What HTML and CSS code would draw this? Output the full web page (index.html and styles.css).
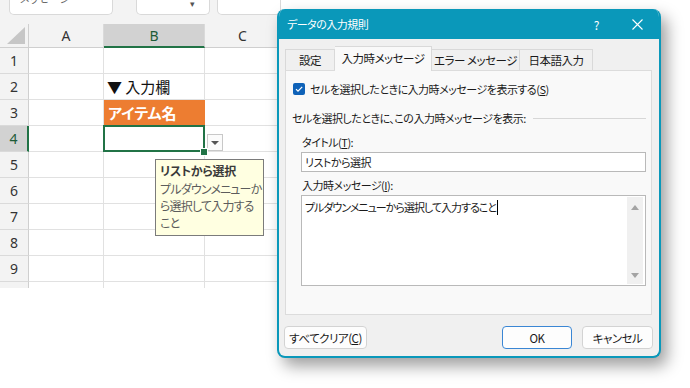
FILE: index.html
```html
<!DOCTYPE html>
<html lang="ja">
<head>
<meta charset="utf-8">
<title>データの入力規則</title>
<link rel="stylesheet" href="styles.css">
</head>
<body>
<div class="sheet">
  <div class="toolbar">
    <div class="tb tb1"><span class="tbtext">メッセージ　　　・・・</span></div>
    <div class="tb tb2"><span class="tbcaret">▾</span></div>
    <div class="tb tb3"></div>
  </div>
  <div class="grid">
    <div class="corner"><svg width="18" height="17" viewBox="0 0 18 17"><polygon points="18,0 18,17 0,17" fill="#c6c6c6"/></svg></div>
    <div class="ch">A</div><div class="ch sel">B</div><div class="ch">C</div>

    <div class="rh">1</div><div class="c"></div><div class="c"></div><div class="c"></div>
    <div class="rh">2</div><div class="c"></div><div class="c txt">▼ 入力欄</div><div class="c"></div>
    <div class="rh">3</div><div class="c"></div><div class="c orange">アイテム名</div><div class="c"></div>
    <div class="rh sel">4</div><div class="c"></div><div class="c active"><span class="handle"></span></div><div class="c"></div>
    <div class="rh">5</div><div class="c"></div><div class="c"></div><div class="c"></div>
    <div class="rh">6</div><div class="c"></div><div class="c"></div><div class="c"></div>
    <div class="rh">7</div><div class="c"></div><div class="c"></div><div class="c"></div>
    <div class="rh">8</div><div class="c"></div><div class="c"></div><div class="c"></div>
    <div class="rh">9</div><div class="c"></div><div class="c"></div><div class="c"></div>
    <div class="rh last"></div><div class="c last"></div><div class="c last"></div><div class="c last"></div>
  </div>
</div>

<div class="ddbtn"><span class="ddarrow"></span></div>

<div class="tooltip">
  <div class="tt-title">リストから選択</div>
  <div class="tt-line">プルダウンメニューか</div>
  <div class="tt-line">ら選択して入力する</div>
  <div class="tt-line">こと</div>
</div>

<div class="dialog">
  <div class="titlebar">
    <span class="title">データの入力規則</span>
    <span class="help">?</span>
    <svg class="close" width="11" height="11" viewBox="0 0 11 11"><path d="M0.5 0.5 L10.5 10.5 M10.5 0.5 L0.5 10.5" stroke="#fff" stroke-width="1.1" fill="none"/></svg>
  </div>
  <div class="dbody">
    <div class="tabs">
      <div class="tab t1">設定</div>
      <div class="tab active t2">入力時メッセージ</div>
      <div class="tab t3">エラー メッセージ</div>
      <div class="tab t4">日本語入力</div>
    </div>
    <div class="panel">
      <div class="chk">
        <span class="box"><svg width="12" height="12" viewBox="0 0 12 12"><path d="M3 6.2 L5 8.2 L9.2 3.8" stroke="#fff" stroke-width="1.2" fill="none"/></svg></span>
        <span>セルを選択したときに入力時メッセージを表示する(<u>S</u>)</span>
      </div>
      <div class="group"><span>セルを選択したときに、この入力時メッセージを表示:</span><span class="rule"></span></div>
      <div class="lbl">タイトル(<u>T</u>):</div>
      <div class="input">リストから選択</div>
      <div class="lbl lbl2">入力時メッセージ(<u>I</u>):</div>
      <div class="textarea">
        <div class="tatext">プルダウンメニューから選択して入力すること<span class="caret"></span></div>
        <div class="sb"><span class="sbup"></span><span class="sbdown"></span></div>
      </div>
    </div>
    <div class="buttons">
      <div class="btn clear">すべてクリア(<u>C</u>)</div>
      <div class="spacer"></div>
      <div class="btn ok">OK</div>
      <div class="btn cancel">キャンセル</div>
    </div>
  </div>
</div>
</body>
</html>
```

FILE: styles.css
```css
* { box-sizing: border-box; }

body {
  margin: 0;
  width: 690px;
  height: 388px;
  overflow: hidden;
  position: relative;
  background: #ffffff;
  font-family: "Noto Sans CJK JP", "Noto Sans", sans-serif;
  font-feature-settings: "palt";
}

/* ---------- spreadsheet ---------- */
.sheet { width: 281px; }

.toolbar {
  height: 24px;
  background: #f3f3f3;
  display: flex;
  padding-left: 9px;
  overflow: hidden;
}
.tb {
  height: 15px;
  background: #ffffff;
  border: 1px solid #d9d9d9;
  border-top: none;
  border-radius: 0 0 5px 5px;
  overflow: hidden;
  position: relative;
}
.tb1 { width: 104px; }
.tb2 { width: 74px; margin-left: 23px; }
.tb3 { flex: 1; margin-left: 7px; }
.tbtext {
  display: block;
  font-size: 11px;
  line-height: 11px;
  margin-top: -7px;
  padding-left: 10px;
  color: #666;
  white-space: nowrap;
}
.tbcaret {
  position: absolute;
  right: 14px;
  top: -3px;
  font-size: 9px;
  color: #555;
}

.grid {
  display: grid;
  grid-template-columns: 29px 75px 101px 76px;
  grid-template-rows: 24px repeat(9, 26px) 6px;
  font-family: "Noto Sans", "Noto Sans CJK JP", sans-serif;
}
.corner {
  background: #f3f3f3;
  border-right: 1px solid #cfcfcf;
  border-bottom: 1px solid #cfcfcf;
  display: flex;
  align-items: flex-end;
  justify-content: flex-end;
  padding: 0 3px 3px 0;
}
.ch {
  background: #f3f3f3;
  border-right: 1px solid #dadada;
  border-bottom: 1px solid #cfcfcf;
  display: flex;
  align-items: center;
  justify-content: center;
  font-size: 14px;
  color: #333;
}
.ch.sel {
  background: #d2d2d2;
  border-bottom: 2px solid #217346;
  color: #1e5c38;
}
.rh {
  background: #f3f3f3;
  border-right: 1px solid #cfcfcf;
  border-bottom: 1px solid #dadada;
  display: flex;
  align-items: center;
  justify-content: center;
  font-size: 14px;
  color: #333;
}
.rh.sel {
  background: #d2d2d2;
  border-right: 2px solid #217346;
  color: #1e5c38;
}
.rh.last, .c.last { border-bottom: none; }
.c {
  border-right: 1px solid #e1e1e1;
  border-bottom: 1px solid #e1e1e1;
}
.c.txt {
  display: flex;
  align-items: center;
  padding-left: 3px;
  font-family: "Noto Sans CJK JP", sans-serif;
  font-size: 15px;
  color: #111;
}
.c.orange {
  background: #ed7d31;
  border-color: #ed7d31;
  display: flex;
  align-items: center;
  padding-left: 4px;
  font-family: "Noto Sans CJK JP", sans-serif;
  font-size: 15px;
  font-weight: bold;
  color: #ffffff;
}
.c.active { position: relative; }
.c.active::before {
  content: "";
  position: absolute;
  left: -1px;
  top: -1px;
  right: -1px;
  bottom: -1px;
  border: 2px solid #217346;
}
.handle {
  position: absolute;
  right: -3px;
  bottom: -4px;
  width: 6px;
  height: 6px;
  background: #217346;
  box-shadow: 0 0 0 1px #ffffff;
  z-index: 2;
}

.ddbtn {
  position: absolute;
  left: 207px;
  top: 134px;
  width: 16px;
  height: 17px;
  border: 1px solid #c8c8c8;
  background: #fbfbfb;
  display: flex;
  align-items: center;
  justify-content: center;
}
.ddarrow {
  width: 0;
  height: 0;
  border-left: 4px solid transparent;
  border-right: 4px solid transparent;
  border-top: 4px solid #555;
}

.tooltip {
  position: absolute;
  left: 155px;
  top: 159px;
  width: 109px;
  height: 77px;
  background: #ffffe1;
  border: 1px solid #7b7b7b;
  padding: 2px 4px;
  font-size: 12px;
  line-height: 17px;
  color: #5c5c5c;
  white-space: nowrap;
}
.tt-title { font-weight: bold; color: #3a3a3a; letter-spacing: -0.3px; line-height: 18px; }
.tt-line { letter-spacing: -0.8px; line-height: 17px; }

/* ---------- dialog ---------- */
.dialog {
  position: absolute;
  left: 277px;
  top: 9px;
  width: 384px;
  height: 349px;
  border: 2px solid #0a98ba;
  border-top: none;
  border-radius: 8px;
  background: #f0f0f0;
  box-shadow: 6px 8px 16px rgba(0, 0, 0, 0.38);
  overflow: hidden;
  display: flex;
  flex-direction: column;
  font-size: 11px;
  letter-spacing: -0.5px;
  color: #1a1a1a;
}
.titlebar {
  height: 30px;
  flex: none;
  background: #0a98ba;
  color: #ffffff;
  display: flex;
  align-items: center;
  padding-left: 8px;
}
.title { flex: 1; }
.help { margin-right: 33px; font-size: 12px; }
.close { margin-right: 16px; }

.dbody {
  flex: 1;
  padding: 7px 6px 0 6px;
  display: flex;
  flex-direction: column;
}
.tabs {
  display: flex;
  align-items: flex-end;
  height: 24px;
  position: relative;
  z-index: 1;
}
.tab {
  height: 21px;
  border: 1px solid #d9d9d9;
  border-bottom: none;
  background: #f0f0f0;
  display: flex;
  align-items: center;
  justify-content: center;
  color: #1a1a1a;
  white-space: nowrap;
  font-size: 11.5px;
}
.tab.active {
  height: 25px;
  margin-bottom: -1px;
  background: #f9f9f9;
  padding-bottom: 2px;
}
.t1 { width: 50px; }
.t2 { width: 97px; border-left: none; }
.t3 { width: 88px; border-left: none; }
.t4 { width: 73px; border-left: none; }

.panel {
  height: 245px;
  margin-right: 1px;
  border: 1px solid #dcdcdc;
  background: #f9f9f9;
  display: flex;
  flex-direction: column;
  padding: 0 5px 0 0;
}
.chk {
  margin-top: 10px;
  height: 16px;
  display: flex;
  align-items: center;
  padding-left: 7px;
  gap: 5px;
  white-space: nowrap;
}
.box {
  width: 12px;
  height: 12px;
  border-radius: 2px;
  background: #0f62b8;
  display: flex;
}
.group {
  margin-top: 13px;
  height: 16px;
  display: flex;
  align-items: center;
  padding-left: 6px;
  white-space: nowrap;
}
.rule {
  flex: 1;
  height: 1px;
  background: #d7d7d7;
  margin: 0 0 0 7px;
}
.lbl {
  margin-top: 8px;
  height: 16px;
  line-height: 16px;
  padding-left: 16px;
}
.lbl2 { margin-top: 5px; }
.input {
  margin: 2px 0 0 15px;
  height: 20px;
  background: #ffffff;
  border: 1px solid #b9b9b9;
  padding-left: 3px;
  line-height: 18px;
}
.textarea {
  margin: 2px 0 0 15px;
  height: 91px;
  background: #ffffff;
  border: 1px solid #b9b9b9;
  display: flex;
}
.tatext {
  flex: 1;
  padding: 3px 0 0 3px;
  line-height: 16px;
  white-space: nowrap;
  letter-spacing: -1px;
}
.caret {
  display: inline-block;
  width: 1px;
  height: 15px;
  background: #000;
  vertical-align: -3px;
  margin-left: 1px;
}
.sb {
  width: 16px;
  margin: 1px 2px 1px 0;
  background: #f0f0f0;
  display: flex;
  flex-direction: column;
  justify-content: space-between;
  align-items: center;
  padding: 8px 0 6px;
}
.sbup {
  width: 0; height: 0;
  border-left: 4px solid transparent;
  border-right: 4px solid transparent;
  border-bottom: 5px solid #a3a3a3;
}
.sbdown {
  width: 0; height: 0;
  border-left: 4px solid transparent;
  border-right: 4px solid transparent;
  border-top: 5px solid #a3a3a3;
}

.buttons {
  margin-top: 11px;
  display: flex;
  height: 23px;
  gap: 10px;
}
.spacer { flex: 1; }
.btn {
  height: 23px;
  background: #fdfdfd;
  border: 1px solid #d3d3d3;
  border-radius: 4px;
  display: flex;
  align-items: center;
  justify-content: center;
  white-space: nowrap;
  color: #1a1a1a;
  font-size: 11.5px;
}
.clear { width: 83px; margin-left: -1px; }
.ok { width: 70px; border-color: #3a86d4; }
.cancel { width: 71px; }
```
